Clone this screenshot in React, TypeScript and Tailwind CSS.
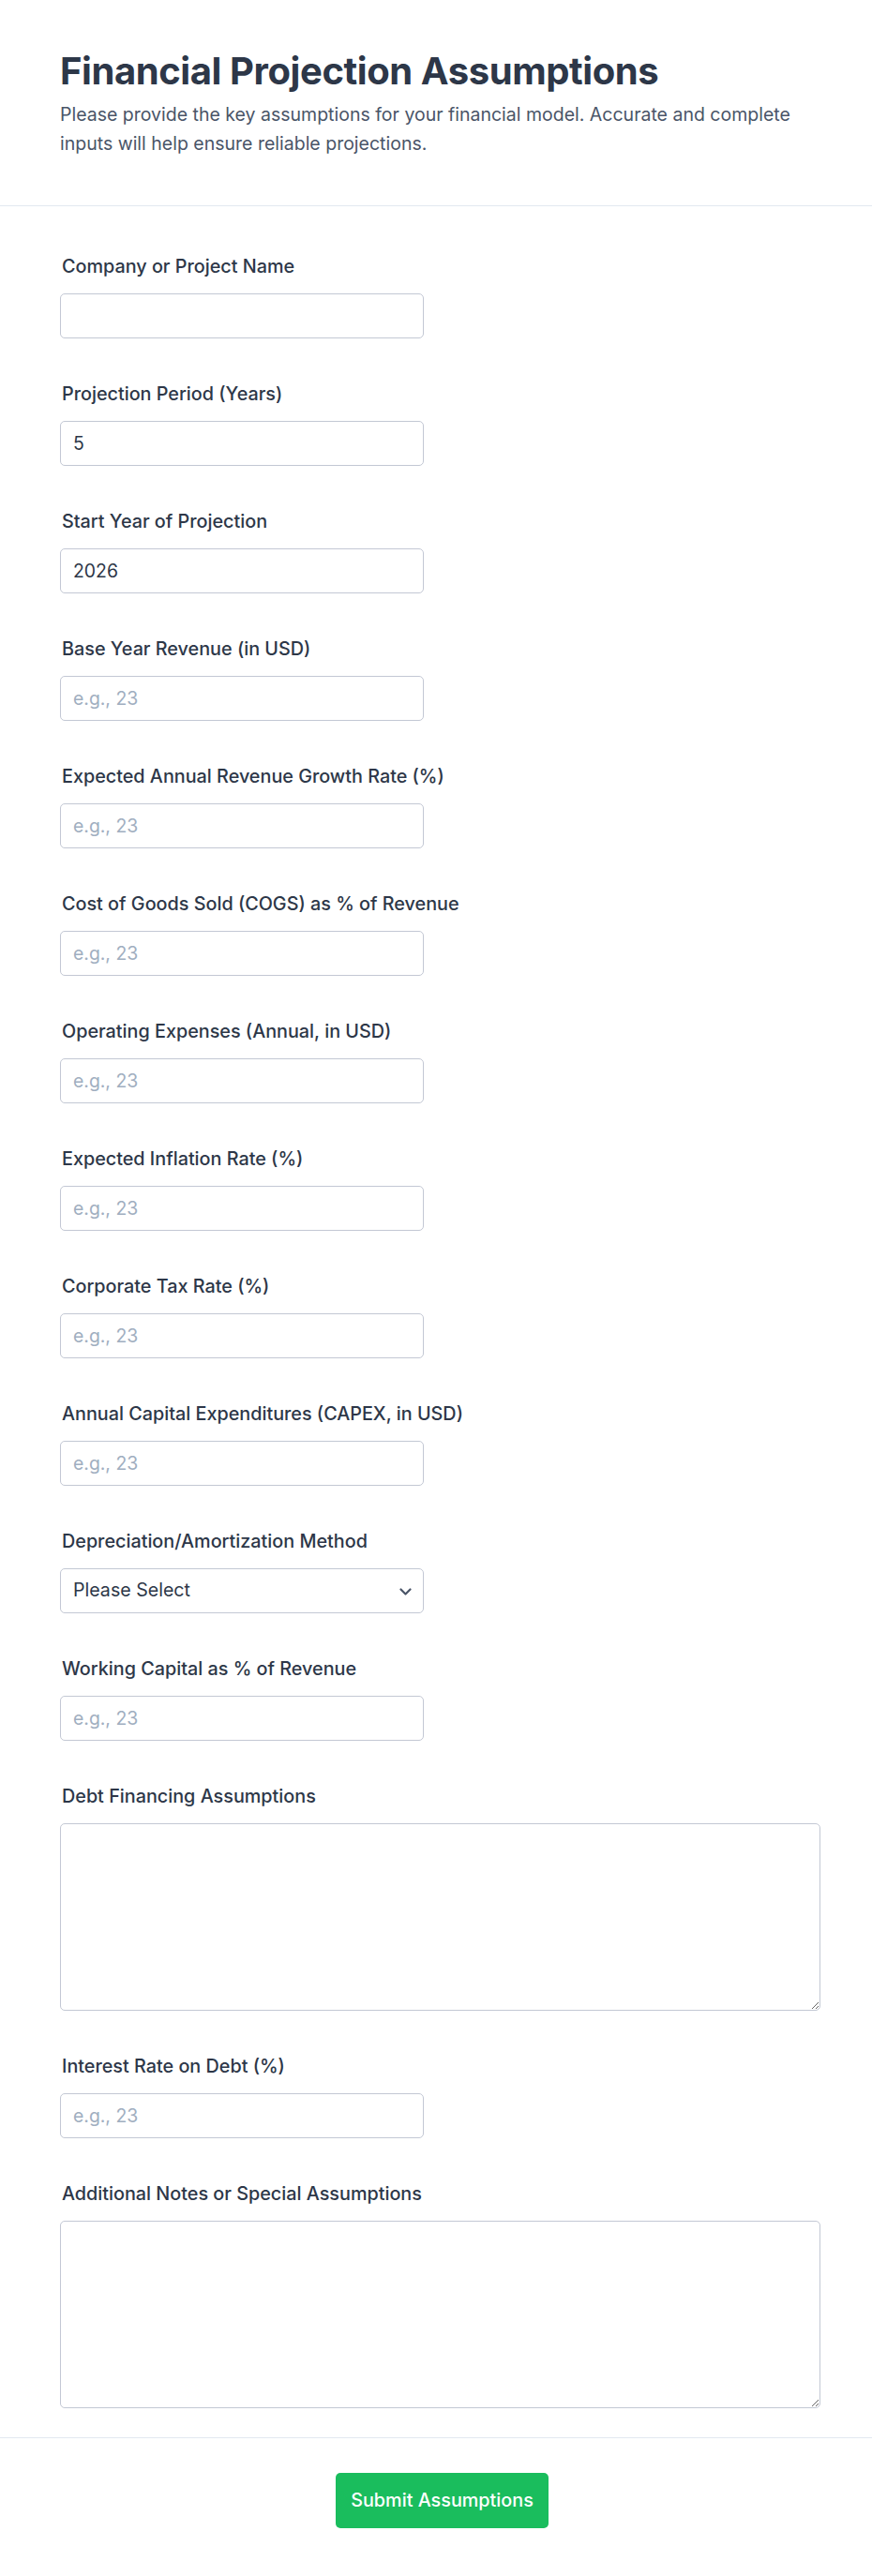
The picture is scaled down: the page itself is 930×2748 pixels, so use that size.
import React from "react";

type Field =
  | { kind: "input"; label: string; value?: string; placeholder?: string }
  | { kind: "select"; label: string }
  | { kind: "textarea"; label: string };

const fields: Field[] = [
  { kind: "input", label: "Company or Project Name" },
  { kind: "input", label: "Projection Period (Years)", value: "5" },
  { kind: "input", label: "Start Year of Projection", value: "2026" },
  { kind: "input", label: "Base Year Revenue (in USD)", placeholder: "e.g., 23" },
  { kind: "input", label: "Expected Annual Revenue Growth Rate (%)", placeholder: "e.g., 23" },
  { kind: "input", label: "Cost of Goods Sold (COGS) as % of Revenue", placeholder: "e.g., 23" },
  { kind: "input", label: "Operating Expenses (Annual, in USD)", placeholder: "e.g., 23" },
  { kind: "input", label: "Expected Inflation Rate (%)", placeholder: "e.g., 23" },
  { kind: "input", label: "Corporate Tax Rate (%)", placeholder: "e.g., 23" },
  { kind: "input", label: "Annual Capital Expenditures (CAPEX, in USD)", placeholder: "e.g., 23" },
  { kind: "select", label: "Depreciation/Amortization Method" },
  { kind: "input", label: "Working Capital as % of Revenue", placeholder: "e.g., 23" },
  { kind: "textarea", label: "Debt Financing Assumptions" },
  { kind: "input", label: "Interest Rate on Debt (%)", placeholder: "e.g., 23" },
  { kind: "textarea", label: "Additional Notes or Special Assumptions" },
];

const inputCls =
  "block w-[388px] h-[48px] px-[13px] rounded-[5px] border border-[#c3c8d4] bg-white text-[19.4px] text-[#2d3748] placeholder:text-[#a0aec0] outline-none";

function FieldBlock({ f }: { f: Field }) {
  return (
    <div className="flex flex-col">
      <label className="block text-[19.8px] leading-[28px] font-medium text-[#2d3748] mb-[15px] pl-[2px]">
        {f.label}
      </label>
      {f.kind === "input" && (
        <input
          type="text"
          className={inputCls}
          defaultValue={f.value}
          placeholder={f.placeholder}
        />
      )}
      {f.kind === "select" && (
        <div className="relative w-[388px]">
          <select
            className="block w-[388px] h-[48px] pl-[13px] pr-[40px] rounded-[5px] border border-[#c3c8d4] bg-white text-[19.6px] text-[#2d3748] appearance-none outline-none"
            defaultValue=""
          >
            <option value="">Please Select</option>
            <option>Straight-Line</option>
            <option>Declining Balance</option>
            <option>Units of Production</option>
          </select>
          <svg
            className="pointer-events-none absolute right-[13px] top-[21px]"
            width="13"
            height="8"
            viewBox="0 0 13 8"
            fill="none"
          >
            <path d="M1.5 1.5l5 5 5-5" stroke="#4a5568" strokeWidth="2.2" strokeLinecap="round" strokeLinejoin="round" />
          </svg>
        </div>
      )}
      {f.kind === "textarea" && (
        <textarea className="block w-[811px] h-[200px] p-[13px] rounded-[5px] border border-[#c3c8d4] bg-white text-[19.4px] text-[#2d3748] outline-none" />
      )}
    </div>
  );
}

export default function App() {
  return (
    <div
      className="bg-white min-h-[2748px] flex flex-col"
      style={{ fontFamily: "Inter, 'Noto Sans', sans-serif" }}
    >
      <header className="pt-[52px] pb-[50px] px-[64px] border-b border-[#e2e8f0]">
        <h1 className="text-[40px] leading-[48px] font-bold text-[#2d3748] tracking-[-0.42px]">
          Financial Projection Assumptions
        </h1>
        <p className="mt-[7px] w-[811px] text-[19.5px] leading-[31px] text-[#4a5568]">
          Please provide the key assumptions for your financial model. Accurate and complete inputs will help ensure reliable projections.
        </p>
      </header>
      <form className="pt-[50px] pb-[31px] px-[64px] flex flex-col gap-[45px]">
        {fields.map((f, i) => (
          <FieldBlock key={i} f={f} />
        ))}
      </form>
      <footer className="border-t border-[#e2e8f0] pt-[37px] pb-[50px] pl-[66px]">
        <div className="w-[811px] flex justify-center">
          <button
            type="button"
            className="w-[227px] h-[59px] rounded-[5px] bg-[#1abd5d] text-white text-[19.8px] font-medium"
          >
            Submit Assumptions
          </button>
        </div>
      </footer>
    </div>
  );
}
